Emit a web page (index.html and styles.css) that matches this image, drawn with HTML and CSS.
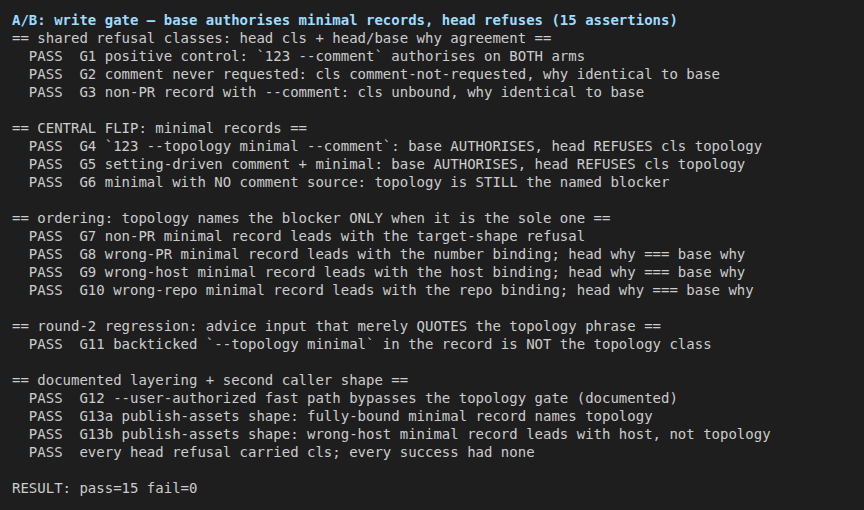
FILE: index.html
```html
<!DOCTYPE html>
<html>
<head>
<meta charset="utf-8">
<link rel="stylesheet" href="styles.css">
</head>
<body>
<pre class="term"><span class="title">A/B: write gate — base authorises minimal records, head refuses (15 assertions)</span>
== shared refusal classes: head cls + head/base why agreement ==
  PASS  G1 positive control: `123 --comment` authorises on BOTH arms
  PASS  G2 comment never requested: cls comment-not-requested, why identical to base
  PASS  G3 non-PR record with --comment: cls unbound, why identical to base

== CENTRAL FLIP: minimal records ==
  PASS  G4 `123 --topology minimal --comment`: base AUTHORISES, head REFUSES cls topology
  PASS  G5 setting-driven comment + minimal: base AUTHORISES, head REFUSES cls topology
  PASS  G6 minimal with NO comment source: topology is STILL the named blocker

== ordering: topology names the blocker ONLY when it is the sole one ==
  PASS  G7 non-PR minimal record leads with the target-shape refusal
  PASS  G8 wrong-PR minimal record leads with the number binding; head why === base why
  PASS  G9 wrong-host minimal record leads with the host binding; head why === base why
  PASS  G10 wrong-repo minimal record leads with the repo binding; head why === base why

== round-2 regression: advice input that merely QUOTES the topology phrase ==
  PASS  G11 backticked `--topology minimal` in the record is NOT the topology class

== documented layering + second caller shape ==
  PASS  G12 --user-authorized fast path bypasses the topology gate (documented)
  PASS  G13a publish-assets shape: fully-bound minimal record names topology
  PASS  G13b publish-assets shape: wrong-host minimal record leads with host, not topology
  PASS  every head refusal carried cls; every success had none

RESULT: pass=15 fail=0</pre>
</body>
</html>
```
FILE: styles.css
```css
html, body {
  margin: 0;
  padding: 0;
  background: #1e1e1e;
  height: 100%;
}
.term {
  margin: 0;
  padding: 11px 12px;
  font-family: "DejaVu Sans Mono", monospace;
  font-size: 14px;
  line-height: 18px;
  color: #cccccc;
  white-space: pre;
}
.title {
  color: #9cdcfe;
  font-weight: bold;
}
```
